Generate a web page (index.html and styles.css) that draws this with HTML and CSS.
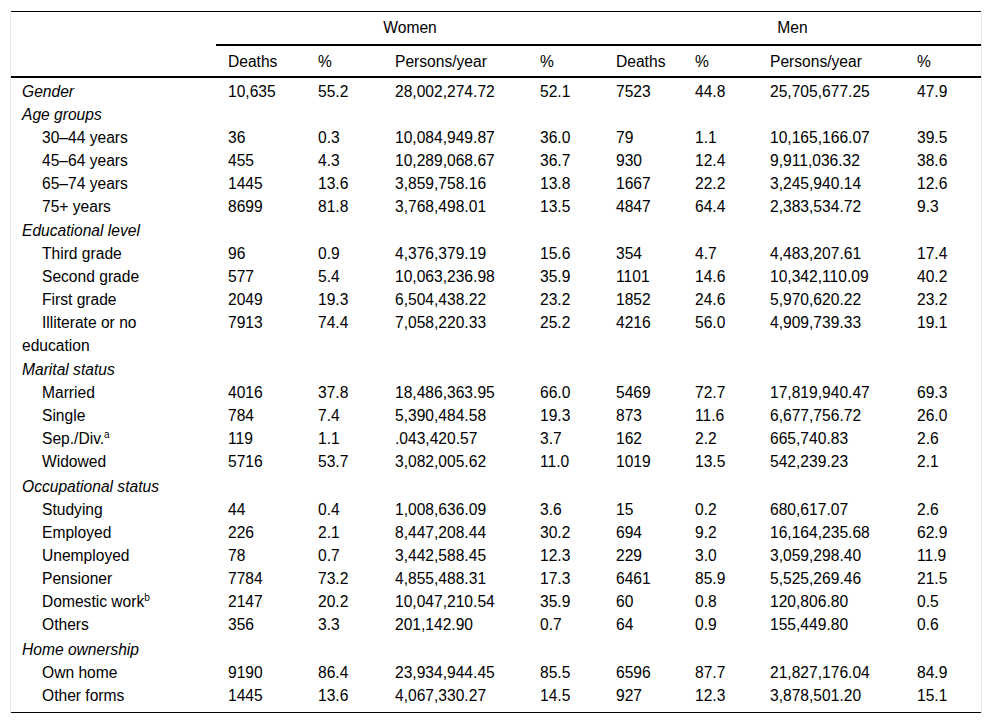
FILE: index.html
```html
<!DOCTYPE html>
<html lang="en">
<head>
<meta charset="utf-8">
<title>Table</title>
<link rel="stylesheet" href="styles.css">
</head>
<body>
<div class="wrap">
<table class="data">
  <colgroup>
    <col class="c-label">
    <col class="c-deaths-w">
    <col class="c-pct1">
    <col class="c-py-w">
    <col class="c-pct2">
    <col class="c-deaths-m">
    <col class="c-pct3">
    <col class="c-py-m">
    <col class="c-pct4">
  </colgroup>
  <thead>
    <tr class="h1">
      <th class="blank" rowspan="2"></th>
      <th class="group" colspan="4">Women</th>
      <th class="group" colspan="4">Men</th>
    </tr>
    <tr class="h2">
      <th>Deaths</th><th>%</th><th>Persons/year</th><th>%</th>
      <th>Deaths</th><th>%</th><th>Persons/year</th><th>%</th>
    </tr>
  </thead>
  <tbody>
    <tr class="first"><td class="sec">Gender</td><td>10,635</td><td>55.2</td><td>28,002,274.72</td><td>52.1</td><td>7523</td><td>44.8</td><td>25,705,677.25</td><td>47.9</td></tr>
    <tr><td class="sec">Age groups</td><td></td><td></td><td></td><td></td><td></td><td></td><td></td><td></td></tr>
    <tr><td class="ind">30–44 years</td><td>36</td><td>0.3</td><td>10,084,949.87</td><td>36.0</td><td>79</td><td>1.1</td><td>10,165,166.07</td><td>39.5</td></tr>
    <tr><td class="ind">45–64 years</td><td>455</td><td>4.3</td><td>10,289,068.67</td><td>36.7</td><td>930</td><td>12.4</td><td>9,911,036.32</td><td>38.6</td></tr>
    <tr><td class="ind">65–74 years</td><td>1445</td><td>13.6</td><td>3,859,758.16</td><td>13.8</td><td>1667</td><td>22.2</td><td>3,245,940.14</td><td>12.6</td></tr>
    <tr><td class="ind">75+ years</td><td>8699</td><td>81.8</td><td>3,768,498.01</td><td>13.5</td><td>4847</td><td>64.4</td><td>2,383,534.72</td><td>9.3</td></tr>
    <tr class="section"><td class="sec">Educational level</td><td></td><td></td><td></td><td></td><td></td><td></td><td></td><td></td></tr>
    <tr><td class="ind">Third grade</td><td>96</td><td>0.9</td><td>4,376,379.19</td><td>15.6</td><td>354</td><td>4.7</td><td>4,483,207.61</td><td>17.4</td></tr>
    <tr><td class="ind">Second grade</td><td>577</td><td>5.4</td><td>10,063,236.98</td><td>35.9</td><td>1101</td><td>14.6</td><td>10,342,110.09</td><td>40.2</td></tr>
    <tr><td class="ind">First grade</td><td>2049</td><td>19.3</td><td>6,504,438.22</td><td>23.2</td><td>1852</td><td>24.6</td><td>5,970,620.22</td><td>23.2</td></tr>
    <tr><td class="ind">Illiterate or no education</td><td>7913</td><td>74.4</td><td>7,058,220.33</td><td>25.2</td><td>4216</td><td>56.0</td><td>4,909,739.33</td><td>19.1</td></tr>
    <tr class="section"><td class="sec">Marital status</td><td></td><td></td><td></td><td></td><td></td><td></td><td></td><td></td></tr>
    <tr><td class="ind">Married</td><td>4016</td><td>37.8</td><td>18,486,363.95</td><td>66.0</td><td>5469</td><td>72.7</td><td>17,819,940.47</td><td>69.3</td></tr>
    <tr><td class="ind">Single</td><td>784</td><td>7.4</td><td>5,390,484.58</td><td>19.3</td><td>873</td><td>11.6</td><td>6,677,756.72</td><td>26.0</td></tr>
    <tr><td class="ind">Sep./Div.<sup>a</sup></td><td>119</td><td>1.1</td><td>.043,420.57</td><td>3.7</td><td>162</td><td>2.2</td><td>665,740.83</td><td>2.6</td></tr>
    <tr><td class="ind">Widowed</td><td>5716</td><td>53.7</td><td>3,082,005.62</td><td>11.0</td><td>1019</td><td>13.5</td><td>542,239.23</td><td>2.1</td></tr>
    <tr class="section2"><td class="sec">Occupational status</td><td></td><td></td><td></td><td></td><td></td><td></td><td></td><td></td></tr>
    <tr><td class="ind">Studying</td><td>44</td><td>0.4</td><td>1,008,636.09</td><td>3.6</td><td>15</td><td>0.2</td><td>680,617.07</td><td>2.6</td></tr>
    <tr><td class="ind">Employed</td><td>226</td><td>2.1</td><td>8,447,208.44</td><td>30.2</td><td>694</td><td>9.2</td><td>16,164,235.68</td><td>62.9</td></tr>
    <tr><td class="ind">Unemployed</td><td>78</td><td>0.7</td><td>3,442,588.45</td><td>12.3</td><td>229</td><td>3.0</td><td>3,059,298.40</td><td>11.9</td></tr>
    <tr><td class="ind">Pensioner</td><td>7784</td><td>73.2</td><td>4,855,488.31</td><td>17.3</td><td>6461</td><td>85.9</td><td>5,525,269.46</td><td>21.5</td></tr>
    <tr><td class="ind">Domestic work<sup>b</sup></td><td>2147</td><td>20.2</td><td>10,047,210.54</td><td>35.9</td><td>60</td><td>0.8</td><td>120,806.80</td><td>0.5</td></tr>
    <tr><td class="ind">Others</td><td>356</td><td>3.3</td><td>201,142.90</td><td>0.7</td><td>64</td><td>0.9</td><td>155,449.80</td><td>0.6</td></tr>
    <tr class="section2"><td class="sec">Home ownership</td><td></td><td></td><td></td><td></td><td></td><td></td><td></td><td></td></tr>
    <tr><td class="ind">Own home</td><td>9190</td><td>86.4</td><td>23,934,944.45</td><td>85.5</td><td>6596</td><td>87.7</td><td>21,827,176.04</td><td>84.9</td></tr>
    <tr class="last"><td class="ind">Other forms</td><td>1445</td><td>13.6</td><td>4,067,330.27</td><td>14.5</td><td>927</td><td>12.3</td><td>3,878,501.20</td><td>15.1</td></tr>
  </tbody>
</table>
</div>
</body>
</html>
```

FILE: styles.css
```css
html, body {
  margin: 0;
  padding: 0;
  background: #fff;
}

body {
  font-family: "Liberation Sans", Arial, sans-serif;
  font-size: 15.6px;
  color: #000;
}

.wrap {
  margin: 11px 0 0 10px;
  width: 970px;
  border-left: 1px solid #e8e8e8;
  border-right: 1px solid #e8e8e8;
}

.data {
  width: 970px;
  border-collapse: collapse;
  table-layout: fixed;
  border-top: 1px solid #000;
  border-bottom: 1px solid #000;
}

.c-label { width: 205px; }
.c-deaths-w { width: 90px; }
.c-pct1 { width: 77px; }
.c-py-w { width: 145px; }
.c-pct2 { width: 76px; }
.c-deaths-m { width: 79px; }
.c-pct3 { width: 75px; }
.c-py-m { width: 147px; }
.c-pct4 { width: 76px; }

.data th,
.data td {
  font-weight: normal;
  text-align: left;
  vertical-align: top;
  line-height: 23px;
  padding: 0 12px;
}

.data thead .h1 th {
  padding-top: 4px;
  padding-bottom: 5px;
}

.data thead .h1 th.group {
  text-align: center;
  border-bottom: 2px solid #000;
}

.data thead .h2 th {
  padding-top: 4px;
  padding-bottom: 3px;
  border-bottom: 2px solid #000;
}

.data thead th.blank {
  border-bottom: 2px solid #000;
}

.data td.sec,
.data td.ind {
  padding-left: 11px;
  padding-right: 24px;
}

.data td.sec {
  font-style: italic;
}

.data td.ind {
  text-indent: 20px;
}

.data tr.first td {
  padding-top: 2px;
}

.data tr.section td {
  padding-top: 1px;
}

.data tr.section2 td {
  padding-top: 2px;
}

.data tr.last td {
  padding-bottom: 5px;
}

.data sup {
  font-size: 10px;
  line-height: 0;
  vertical-align: 6px;
}
```
